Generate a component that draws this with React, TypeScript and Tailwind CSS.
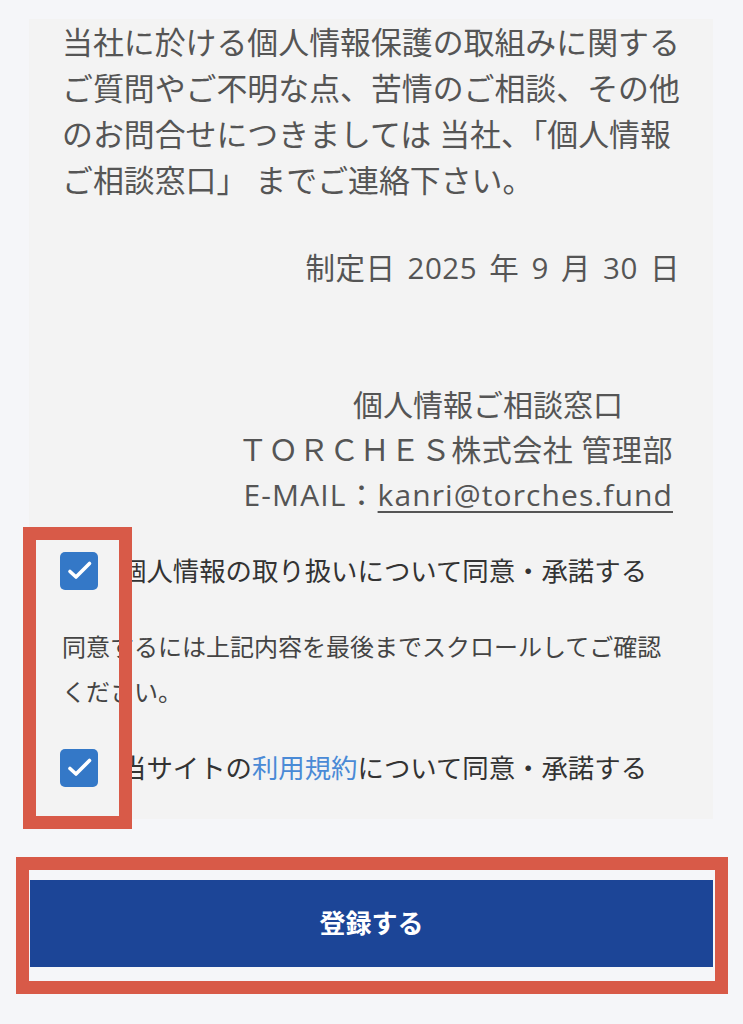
import React from 'react';

// Checked checkbox, drawn as a blue square with a white tick
const Checkbox = () => (
    <span className="flex items-center justify-center w-[38px] h-[38px] shrink-0 rounded-[5px] bg-[#3478c7]">
        <svg width="38" height="38" viewBox="0 0 38 38" fill="none">
            <polyline points="10,19.5 16,25 29.5,11.5" stroke="#fff" strokeWidth="3.6" strokeLinecap="round" strokeLinejoin="round" />
        </svg>
    </span>
);

const App = () => {
    return (
        <div className="relative min-h-[1024px] bg-[#f5f6f9] pt-[20px] pb-[56px] font-['Open_Sans','Noto_Sans_CJK_JP',sans-serif]">
            {/* Policy panel */}
            <div className="ml-[29px] mr-[30px] bg-[#f3f3f3] pl-[33px] pr-[33px] pb-[28px]">
                <p className="text-[30.9px] leading-[46px] text-[#555555] whitespace-nowrap -mt-[1px]">
                    当社に於ける個人情報保護の取組みに関する<br />
                    ご質問やご不明な点、苦情のご相談、その他<br />
                    のお問合せにつきましては 当社、「個人情報<br />
                    ご相談窓口」 までご連絡下さい。
                </p>
                <p className="mt-[42px] text-right text-[29.5px] leading-[46px] text-[#555555] whitespace-nowrap [word-spacing:4px] tracking-[0.5px]">
                    制定日 2025 年 9 月 30 日
                </p>
                <div className="mt-[91px] flex flex-col items-end pr-[7px] text-[30px] leading-[45px] text-[#555555] whitespace-nowrap">
                    <span className="pr-[50px]">個人情報ご相談窓口</span>
                    <span className="tracking-[0.5px]">ＴＯＲＣＨＥＳ株式会社 管理部</span>
                    <span className="tracking-[1.1px]">
                        E-MAIL：<span className="underline underline-offset-[5px] decoration-[1.5px]">kanri@torches.fund</span>
                    </span>
                </div>

                <label className="mt-[31px] flex items-center h-[46px]">
                    <span className="-ml-[2px]"><Checkbox /></span>
                    <span className="ml-[22px] text-[26.4px] leading-[46px] text-[#333333] whitespace-nowrap">
                        個人情報の取り扱いについて同意・承諾する
                    </span>
                </label>

                <p className="mt-[30px] text-[24px] leading-[45px] text-[#444444]">
                    同意するには上記内容を最後までスクロールしてご確認ください。
                </p>

                <label className="mt-[31px] flex items-center h-[46px]">
                    <span className="-ml-[2px]"><Checkbox /></span>
                    <span className="ml-[22px] text-[26.4px] leading-[46px] text-[#333333] whitespace-nowrap">
                        当サイトの<span className="text-[#4a8ad6]">利用規約</span>について同意・承諾する
                    </span>
                </label>
            </div>

            {/* Submit */}
            <button className="mt-[61px] ml-[30px] w-[683px] h-[87px] flex items-center justify-center bg-[#1c4597] text-white text-[26px] font-bold">
                登録する
            </button>

            {/* Red annotation frames */}
            <div className="absolute left-[23px] top-[527px] w-[109px] h-[302px] border-[13px] border-[#d85a48] pointer-events-none" />
            <div className="absolute left-[16px] top-[857px] w-[712px] h-[137px] border-[13px] border-[#d85a48] pointer-events-none" />
        </div>
    );
};

export default App;
